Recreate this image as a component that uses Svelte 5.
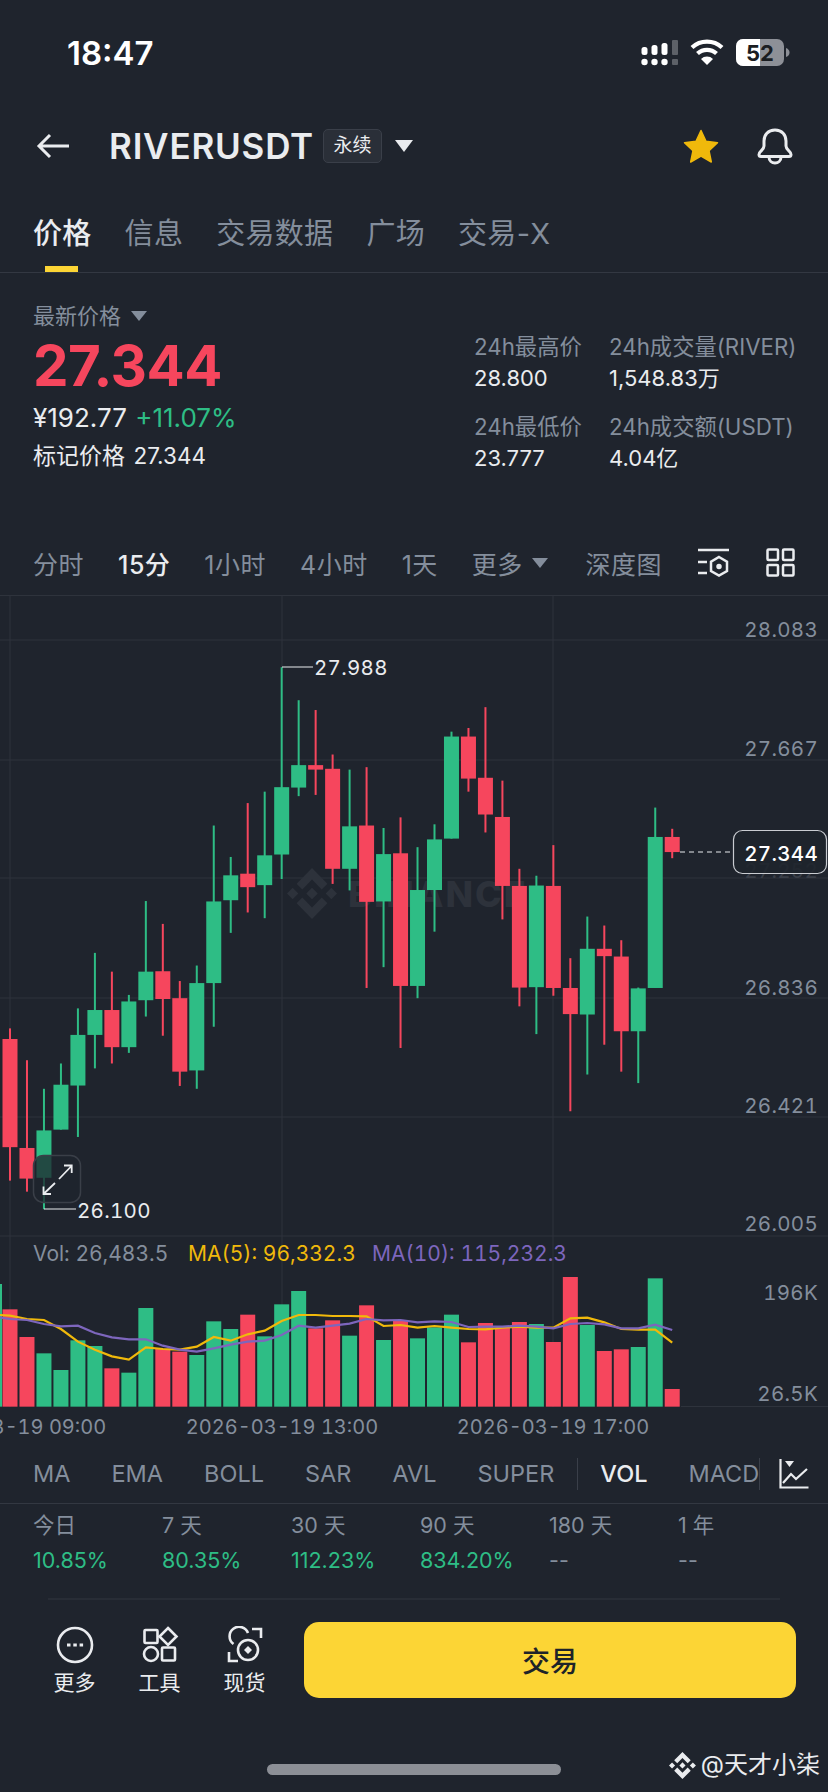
<script lang="ts">
	const UP = '#2ebd85';
	const DOWN = '#f6465d';

	// read off the price crop: [wickTop, bodyTop, bodyBottom, wickBottom, up?]
	const rawCandles: [number, number, number, number, number][] = [
		[1052, 1078, 1343, 1425, 0], [1130, 1345, 1420, 1452, 0], [1200, 1302, 1418, 1495, 1], [1138, 1190, 1300, 1300, 1],
		[1003, 1068, 1192, 1318, 1], [867, 1007, 1068, 1150, 1], [913, 1007, 1098, 1138, 0], [970, 986, 1098, 1112, 1],
		[740, 913, 983, 1023, 1], [796, 912, 980, 1070, 0], [936, 978, 1158, 1193, 0], [898, 941, 1155, 1200, 1],
		[555, 741, 941, 1048, 1], [632, 677, 738, 818, 1], [500, 673, 706, 768, 0], [472, 628, 701, 782, 1],
		[167, 461, 626, 686, 1], [248, 407, 462, 483, 1], [272, 407, 418, 480, 0], [381, 416, 661, 698, 0],
		[418, 557, 661, 714, 1], [412, 555, 742, 953, 0], [561, 625, 741, 902, 1], [535, 623, 948, 1100, 0],
		[608, 713, 948, 978, 1], [552, 589, 713, 815, 1], [325, 337, 587, 587, 1], [316, 337, 440, 472, 0],
		[265, 438, 528, 572, 0], [445, 534, 703, 785, 0], [661, 703, 952, 998, 0], [678, 702, 951, 1066, 1],
		[603, 703, 953, 972, 0], [880, 953, 1017, 1255, 0], [778, 857, 1018, 1165, 1], [800, 857, 875, 1092, 0],
		[836, 876, 1059, 1158, 0], [952, 954, 1059, 1186, 1], [511, 583, 953, 953, 1], [563, 583, 620, 635, 0]
	];

	const candleX = (i: number) => 10 + i * 16.98;
	const toY = (v: number) => v / 2.45 + 600;

	const candles = rawCandles.map(([wt, bt, bb, wb, up], i) => ({
		x: candleX(i),
		wickTop: toY(wt),
		wickBottom: toY(wb),
		bodyTop: toY(bt),
		bodyHeight: (bb - bt) / 2.45,
		color: up ? UP : DOWN
	}));

	// volume tops in the crop starting at y=1230, bars sit on y=533 of that crop
	const rawVolume: [number, number][] = [
		[241, 0], [324, 0], [373, 1], [423, 1], [334, 1], [351, 1], [418, 0], [431, 1], [237, 1], [360, 0],
		[368, 0], [378, 1], [277, 1], [300, 1], [257, 0], [322, 1], [226, 1], [186, 1], [298, 0], [274, 0],
		[320, 1], [229, 0], [333, 1], [275, 0], [328, 1], [295, 1], [257, 1], [340, 0], [282, 0], [297, 0],
		[279, 0], [285, 1], [339, 0], [144, 0], [288, 1], [366, 0], [361, 0], [354, 1], [148, 1], [480, 0]
	];

	const volY = (v: number) => v / 3 + 1230;
	const volume = rawVolume.map(([top, up], i) => ({
		x: candleX(i),
		top: volY(top),
		height: (533 - top) / 3,
		color: up ? UP : DOWN
	}));

	const ma5 = [258, 260, 270, 273, 300, 338, 362, 382, 392, 355, 360, 362, 353, 324, 335, 316, 305, 276, 258, 258, 261, 261, 262, 291, 288, 296, 291, 296, 300, 301, 296, 293, 296, 296, 268, 266, 280, 300, 302, 302, 341];
	const ma10 = [266, 270, 273, 285, 292, 290, 312, 325, 331, 331, 350, 362, 368, 358, 347, 338, 335, 318, 290, 296, 290, 284, 270, 274, 273, 280, 277, 279, 294, 293, 293, 290, 293, 298, 285, 282, 286, 298, 298, 287, 303];

	// the two MA lists start at the left edge, one slot before the first candle
	const linePoints = (ys: number[]) =>
		ys.map((y, i) => `${i === 0 ? 0 : candleX(i - 1)},${volY(y)}`).join(' ');

	const grid = [641, 761, 879, 999, 1118, 1237];
	const vgrid = [10, 282, 553];
	const prices = [
		{ label: '28.083', y: 629.5 },
		{ label: '27.667', y: 748.5 },
		{ label: '26.836', y: 988 },
		{ label: '26.421', y: 1106 },
		{ label: '26.005', y: 1224 }
	];

	const tabs = ['信息', '交易数据', '广场', '交易-X'];
	const stats = [
		{ label: '24h最高价', value: '28.800' },
		{ label: '24h成交量(RIVER)', value: '1,548.83万' },
		{ label: '24h最低价', value: '23.777' },
		{ label: '24h成交额(USDT)', value: '4.04亿' }
	];
	const indicators = ['MA', 'EMA', 'BOLL', 'SAR', 'AVL', 'SUPER'];
	const periods = [
		{ label: '今日', value: '10.85%' },
		{ label: '7 天', value: '80.35%' },
		{ label: '30 天', value: '112.23%' },
		{ label: '90 天', value: '834.20%' },
		{ label: '180 天', value: '--' },
		{ label: '1 年', value: '--' }
	];

	const binance =
		'M38.73 53.2l24.59-24.58 24.6 24.6 14.3-14.31L63.32 0 24.42 38.9zM0 63.31l14.3-14.31 14.31 14.31-14.31 14.3zM38.73 73.41l24.59 24.59 24.6-24.6 14.31 14.29-38.9 38.91-38.91-38.88-.02-.02zM98 63.31l14.3-14.31 14.31 14.3-14.31 14.32zM77.83 63.3L63.32 48.78 52.59 59.51l-1.24 1.23-2.54 2.54 14.51 14.5 14.51-14.47z';
</script>

<div class="page">
	<div class="status">
		<span class="time">18:47</span>
		<svg class="status-icons" width="150" height="30" viewBox="640 38 150 30">
			<g fill="#fff">
				<rect x="641.500" y="47" width="6" height="8" rx="2.500" />
				<rect x="651.500" y="45" width="6" height="10" rx="2.500" />
				<rect x="661.500" y="43" width="6" height="12" rx="2.500" />
				<circle cx="644.500" cy="62" r="3.200" />
				<circle cx="654.500" cy="62" r="3.200" />
				<circle cx="664.500" cy="62" r="3.200" />
			</g>
			<rect x="672" y="40" width="6" height="15" rx="1" fill="#5d6168" />
			<rect x="672" y="59" width="6" height="6" rx="1" fill="#5d6168" />
			<g fill="none" stroke="#fff" stroke-width="4.200">
				<path d="M692 47.500a22 22 0 0 1 30 0" />
				<path d="M697.500 53.500a14 14 0 0 1 19 0" />
			</g>
			<path d="M707 65l-6-6a8.500 8.500 0 0 1 12 0z" fill="#fff" />
			<rect x="736" y="39" width="48" height="27" rx="7" fill="#8d9097" />
			<path d="M743 39h17v27h-17a7 7 0 0 1-7-7v-13a7 7 0 0 1 7-7z" fill="#fff" />
			<path d="M786 48c2.500 1 3.500 2.500 3.500 4.500s-1 3.500-3.500 4.500z" fill="#8d9097" />
			<text x="760" y="60.500" class="battery">52</text>
		</svg>
	</div>

	<header class="top">
		<svg class="back" width="34" height="26" viewBox="0 0 34 26" fill="none" stroke="#eaecef" stroke-width="3">
			<path d="M33 13H3M14 2L3 13l11 11" />
		</svg>
		<span class="symbol">RIVERUSDT</span>
		<span class="badge">永续</span>
		<span class="caret big"></span>
		<svg class="star" width="38" height="36" viewBox="0 0 38 36">
			<path d="M19 2.500l5 10.800 11.500 1.400-8.500 7.900 2.300 11.400L19 28l-10.300 6 2.300-11.400-8.500-7.900L14 13.300z" fill="#f0b90b" stroke="#f0b90b" stroke-width="1.500" stroke-linejoin="round" />
		</svg>
		<svg class="bell" width="36" height="37" viewBox="0 0 36 37" fill="none" stroke="#eaecef" stroke-width="3">
			<path d="M18 2C11 2 7 7 7 13v5c0 4-5 5-5 8.500 0 1.500 1 2 2 2h28c1 0 2-.5 2-2C34 23 29 22 29 18v-5C29 7 25 2 18 2zM12 29c0 4 3 6 6 6s6-2 6-6" />
		</svg>
	</header>

	<nav class="tabs">
		<span class="tab active">价格</span>
		{#each tabs as tab}
			<span class="tab">{tab}</span>
		{/each}
	</nav>

	<section class="stats">
		<div class="stats-left">
			<div class="latest">最新价格 <span class="caret"></span></div>
			<div class="price">27.344</div>
			<div class="change"><span>¥192.77</span> <span class="up">+11.07%</span></div>
			<div class="mark">标记价格 <span>27.344</span></div>
		</div>
		<div class="stats-right">
			{#each stats as stat}
				<div class="stat">
					<div class="stat-label">{stat.label}</div>
					<div class="stat-value">{stat.value}</div>
				</div>
			{/each}
		</div>
	</section>

	<div class="intervals">
		<span>分时</span>
		<span class="current">15分</span>
		<span>1小时</span>
		<span>4小时</span>
		<span>1天</span>
		<span class="more">更多<i class="caret"></i></span>
		<span class="depth">深度图</span>
		<svg width="32" height="30" viewBox="0 0 32 30" fill="none" stroke="#eaecef" stroke-width="2.500">
			<path d="M0 2h31M0 14h9M0 25h9" />
			<path d="M21 9l8 4.600v9.400l-8 4.600-8-4.600v-9.400z" />
			<circle cx="21" cy="18.500" r="1.500" fill="#eaecef" />
		</svg>
		<svg width="29" height="29" viewBox="0 0 29 29" fill="none" stroke="#eaecef" stroke-width="2.500">
			<rect x="1.500" y="1.500" width="10.500" height="10.500" rx="1" />
			<rect x="17" y="1.500" width="10.500" height="10.500" rx="1" />
			<rect x="1.500" y="17" width="10.500" height="10.500" rx="1" />
			<rect x="17" y="17" width="10.500" height="10.500" rx="1" />
		</svg>
	</div>

	<svg class="chart" width="828" height="849" viewBox="0 596 828 849">
		{#each grid as y}
			<line x1="0" x2="828" y1={y} y2={y} class="grid" />
		{/each}
		<line x1="0" x2="828" y1="596.500" y2="596.500" class="grid" />
		{#each vgrid as x}
			<line x1={x} x2={x} y1="596" y2="1408" class="grid" />
		{/each}

		<path d={binance} fill="#2d323b" transform="translate(287 869) scale(0.395 0.403)" />
		<text x="348" y="908" class="watermark">BINANCE</text>

		{#each candles as c}
			<rect x={c.x - 1} y={c.wickTop} width="2" height={c.wickBottom - c.wickTop} fill={c.color} />
			<rect x={c.x - 7.500} y={c.bodyTop} width="15" height={c.bodyHeight} fill={c.color} />
		{/each}

		{#each prices as p}
			<text x="818" y={p.y + 8} class="axis" text-anchor="end">{p.label}</text>
		{/each}
		<text x="818" y="879" class="axis ghost" text-anchor="end">27.252</text>

		<path d="M282 668h31" class="tick" />
		<text x="314" y="676" class="extreme">27.988</text>
		<path d="M44 1210h32" class="tick" />
		<text x="77" y="1219" class="extreme">26.100</text>

		<line x1="680" x2="733" y1="853" y2="853" stroke="#eaecef" stroke-width="1.200" stroke-dasharray="5 4" />
		<rect x="733.500" y="831.500" width="93" height="43" rx="9" fill="#1f242d" fill-opacity="0.85" stroke="#c9ccd1" stroke-width="1.200" />
		<text x="818" y="862" class="axis now" text-anchor="end">27.344</text>

		<rect x="33.500" y="1156.500" width="47" height="47" rx="10" fill="#1f242d" fill-opacity="0.75" stroke="#3a3f48" stroke-width="1.500" />
		<g fill="none" stroke="#eaecef" stroke-width="1.800">
			<path d="M59 1180l12.500-13M64 1166.500h7.700v7.500" />
			<path d="M55 1184l-11.500 11M51 1195h-7.500v-7.500" />
		</g>

		<text x="33" y="1262" class="legend muted">Vol: 26,483.5</text>
		<text x="188" y="1262" class="legend yellow">MA(5): 96,332.3</text>
		<text x="372" y="1262" class="legend purple">MA(10): 115,232.3</text>

		<rect x="-12" y={volY(165)} width="14" height={(533 - 165) / 3} fill={UP} />
		{#each volume as v}
			<rect x={v.x - 7.500} y={v.top} width="15" height={v.height} fill={v.color} />
		{/each}
		<polyline points={linePoints(ma5)} fill="none" stroke="#f0b90b" stroke-width="2.200" />
		<polyline points={linePoints(ma10)} fill="none" stroke="#7d66bd" stroke-width="2.200" />

		<line x1="681" x2="828" y1="1407.500" y2="1407.500" class="grid" />
		<text x="818" y="1301" class="axis" text-anchor="end">196K</text>
		<text x="818" y="1402" class="axis" text-anchor="end">26.5K</text>

		<text x="10" y="1435" class="legend date" text-anchor="middle">2026-03-19 09:00</text>
		<text x="282" y="1435" class="legend date" text-anchor="middle">2026-03-19 13:00</text>
		<text x="553" y="1435" class="legend date" text-anchor="middle">2026-03-19 17:00</text>
	</svg>

	<div class="indicators">
		<div class="indicator-list">
			{#each indicators as item}
				<span>{item}</span>
			{/each}
			<i class="rule"></i>
			<span class="current">VOL</span>
			<span>MACD</span>
		</div>
		<i class="rule"></i>
		<svg width="30" height="30" viewBox="0 0 30 30" fill="none" stroke="#eaecef" stroke-width="2.200">
			<path d="M1.500 0v28.500h28" />
			<path d="M4 24l8-9 5 5 11-10" />
			<path d="M6 2h9l-4.500 6z" fill="#eaecef" stroke="none" />
		</svg>
	</div>

	<div class="periods">
		{#each periods as p}
			<div class="period">
				<span class="period-label">{p.label}</span>
				<span class={p.value === '--' ? 'period-value empty' : 'period-value'}>{p.value}</span>
			</div>
		{/each}
	</div>

	<div class="divider"></div>

	<div class="actions">
		<div class="action">
			<svg width="38" height="38" viewBox="0 0 38 38" fill="none" stroke="#eaecef" stroke-width="2.600">
				<circle cx="19" cy="19" r="17" />
				<path d="M11 19h3.500M17.300 19h3.500M23.600 19h3.500" stroke-width="3.200" />
			</svg>
			<span>更多</span>
		</div>
		<div class="action">
			<svg width="38" height="38" viewBox="0 0 38 38" fill="none" stroke="#eaecef" stroke-width="2.600">
				<rect x="3.500" y="4" width="13" height="13" rx="1" />
				<path d="M27 2l8.500 8.500L27 19l-8.500-8.500z" />
				<circle cx="10" cy="28" r="7" />
				<rect x="21" y="21.500" width="13" height="13" rx="1" />
			</svg>
			<span>工具</span>
		</div>
		<div class="action">
			<svg width="38" height="38" viewBox="0 0 38 38" fill="none" stroke="#eaecef" stroke-width="2.600">
				<path d="M26 3h9v9M3 26v9h9" />
				<path d="M7.500 18A9.500 9.500 0 1 1 22 7" />
				<circle cx="22" cy="24" r="10" />
				<path d="M22 20l4 4-4 4-4-4z" fill="#eaecef" stroke="none" />
			</svg>
			<span>现货</span>
		</div>
		<button class="trade">交易</button>
	</div>

	<div class="foot">
		<div class="home"></div>
		<div class="credit">
			<svg width="27" height="27" viewBox="0 0 127 127"><path d={binance} fill="#eaecef" /></svg>
			<span>@天才小柒</span>
		</div>
	</div>
</div>

<style>
	:global(body) {
		margin: 0;
		background: #1f242d;
	}

	.page {
		width: 828px;
		height: 1792px;
		overflow: hidden;
		background: #1f242d;
		color: #eaecef;
		font-family: Inter, 'Noto Sans CJK SC', sans-serif;
	}

	.status {
		height: 100px;
		display: flex;
		justify-content: space-between;
		padding: 0 38px 0 67px;
		box-sizing: border-box;
	}

	.time {
		font-size: 33px;
		font-weight: 600;
		line-height: 40px;
		margin-top: 33px;
		color: #fff;
	}

	.status-icons {
		margin-top: 38px;
	}

	.battery {
		font-size: 22px;
		font-weight: 700;
		fill: #1a1d22;
		text-anchor: middle;
	}

	.top {
		height: 92px;
		display: flex;
		align-items: center;
		padding-left: 36px;
	}

	.back {
		margin-right: 39px;
	}

	.symbol {
		font-size: 35px;
		font-weight: 600;
		letter-spacing: 0.8px;
		color: #eaecef;
		margin-right: 9px;
	}

	.badge {
		width: 59px;
		height: 34px;
		box-sizing: border-box;
		border: 1px solid #3a3f49;
		background: #2a2f38;
		border-radius: 5px;
		font-size: 19px;
		line-height: 32px;
		text-align: center;
		margin-right: 13px;
	}

	.caret {
		display: inline-block;
		width: 0;
		height: 0;
		border-left: 8px solid transparent;
		border-right: 8px solid transparent;
		border-top: 10px solid #848e9c;
	}

	.caret.big {
		border-left-width: 9.500px;
		border-right-width: 9.500px;
		border-top: 12px solid #eaecef;
	}

	.star {
		margin-left: auto;
		margin-right: 37px;
	}

	.bell {
		margin-right: 35px;
	}

	.tabs {
		height: 81px;
		box-sizing: border-box;
		display: flex;
		gap: 33px;
		padding: 23px 0 0 33px;
		border-bottom: 1px solid #333842;
	}

	.tab {
		font-size: 29px;
		letter-spacing: 0.3px;
		line-height: 38px;
		color: #848e9c;
		position: relative;
	}

	.tab.active {
		color: #eaecef;
		font-weight: 500;
	}

	.tab.active::after {
		content: '';
		position: absolute;
		left: 12px;
		width: 33px;
		height: 6px;
		top: 51px;
		background: #fcd535;
	}

	.stats {
		height: 237px;
		box-sizing: border-box;
		display: flex;
		justify-content: space-between;
		padding: 30px 0 0 33px;
	}

	.latest {
		font-size: 22px;
		line-height: 26px;
		color: #848e9c;
	}

	.latest .caret {
		margin-left: 4px;
		vertical-align: 3px;
	}

	.price {
		font-size: 56.500px;
		font-weight: 700;
		line-height: 60px;
		margin-top: 7px;
		color: #f6465d;
		letter-spacing: -0.5px;
	}

	.change {
		font-size: 26px;
		line-height: 28px;
		margin-top: 8px;
	}

	.up {
		color: #2ebd85;
		margin-left: 1px;
	}

	.mark {
		font-size: 23px;
		line-height: 28px;
		margin-top: 10px;
	}

	.mark span {
		margin-left: 2px;
		font-size: 22.500px;
	}

	.stats-right {
		display: grid;
		grid-template-columns: 135px 219px;
		row-gap: 21px;
		margin-top: 30px;
		height: 130px;
		align-content: start;
	}

	.stat-label {
		font-size: 22.300px;
		line-height: 28px;
		color: #848e9c;
	}

	.stat-value {
		font-size: 22px;
		line-height: 28px;
		margin-top: 3px;
	}

	.intervals {
		height: 85px;
		box-sizing: border-box;
		display: flex;
		align-items: center;
		gap: 34px;
		padding: 20px 33px 0 33px;
		font-size: 25px;
		letter-spacing: 0.5px;
		color: #848e9c;
		white-space: nowrap;
	}

	.intervals .current {
		color: #eaecef;
		font-weight: 500;
	}

	.more {
		display: inline-flex;
		align-items: center;
		gap: 9px;
	}

	.depth {
		margin-left: auto;
	}

	.intervals svg {
		flex: none;
		margin-left: 2px;
	}

	.chart {
		display: block;
		font-variant-numeric: tabular-nums;
	}

	.grid {
		stroke: #2e333c;
		stroke-width: 1;
	}

	.watermark {
		font-size: 36px;
		font-weight: 800;
		letter-spacing: 2px;
		fill: #2d323b;
	}

	.axis {
		font-size: 20.500px;
		letter-spacing: 0.3px;
		fill: #848e9c;
	}

	.axis.ghost {
		fill: #3a3f48;
	}

	.axis.now {
		fill: #fff;
		font-weight: 500;
	}

	.extreme {
		font-size: 20.500px;
		letter-spacing: 0.3px;
		fill: #eaecef;
	}

	.tick {
		fill: none;
		stroke: #eaecef;
		stroke-width: 1;
	}

	.legend {
		font-size: 21px;
	}

	.date {
		font-size: 20px;
	}

	.muted,
	.date {
		fill: #848e9c;
	}

	.yellow {
		fill: #f0b90b;
	}

	.purple {
		fill: #7d66bd;
	}

	.indicators {
		height: 60px;
		box-sizing: border-box;
		display: flex;
		align-items: center;
		padding-left: 33px;
		border-bottom: 1px solid #333842;
		font-size: 23.500px;
		color: #848e9c;
	}

	.indicator-list {
		width: 726px;
		display: flex;
		align-items: center;
		gap: 41px;
		overflow: hidden;
		white-space: nowrap;
	}

	.indicator-list .rule {
		margin: 0 -19px 0 -18px;
	}

	.indicator-list .current {
		color: #eaecef;
		font-weight: 500;
	}

	.rule {
		flex: none;
		width: 1px;
		height: 32px;
		background: #3a3f49;
	}

	.indicators svg {
		margin-left: 19px;
	}

	.periods {
		height: 94px;
		box-sizing: border-box;
		display: grid;
		grid-template-columns: repeat(6, 129px);
		padding: 8px 0 0 33px;
	}

	.period {
		display: flex;
		flex-direction: column;
		gap: 9px;
	}

	.period-label {
		font-size: 21.500px;
		line-height: 26px;
		color: #848e9c;
	}

	.period-value {
		font-size: 21.500px;
		line-height: 26px;
		color: #2ebd85;
	}

	.period-value.empty {
		color: #848e9c;
	}

	.divider {
		height: 2px;
		margin: 0 48px;
		background: #282d36;
	}

	.actions {
		display: flex;
		align-items: flex-start;
		padding: 20px 32px 0 0;
		height: 150px;
		box-sizing: border-box;
	}

	.action {
		width: 85px;
		display: flex;
		flex-direction: column;
		align-items: center;
		gap: 6px;
		font-size: 21px;
		line-height: 26px;
		color: #eaecef;
		margin-top: 6px;
	}

	.action:first-child {
		margin-left: 32px;
	}

	.trade {
		margin-left: auto;
		margin-top: 2px;
		width: 492px;
		height: 76px;
		border: 0;
		border-radius: 15px;
		background: #fcd535;
		color: #1e2329;
		font: 500 28px Inter, 'Noto Sans CJK SC', sans-serif;
	}

	.foot {
		position: relative;
		height: 42px;
	}

	.home {
		position: absolute;
		left: 267px;
		top: 14px;
		width: 294px;
		height: 11px;
		border-radius: 6px;
		background: #8c8f96;
	}

	.credit {
		position: absolute;
		right: 8px;
		top: 0;
		display: flex;
		align-items: center;
		gap: 5px;
		font-size: 24px;
		line-height: 30px;
		color: #eaecef;
	}
</style>
